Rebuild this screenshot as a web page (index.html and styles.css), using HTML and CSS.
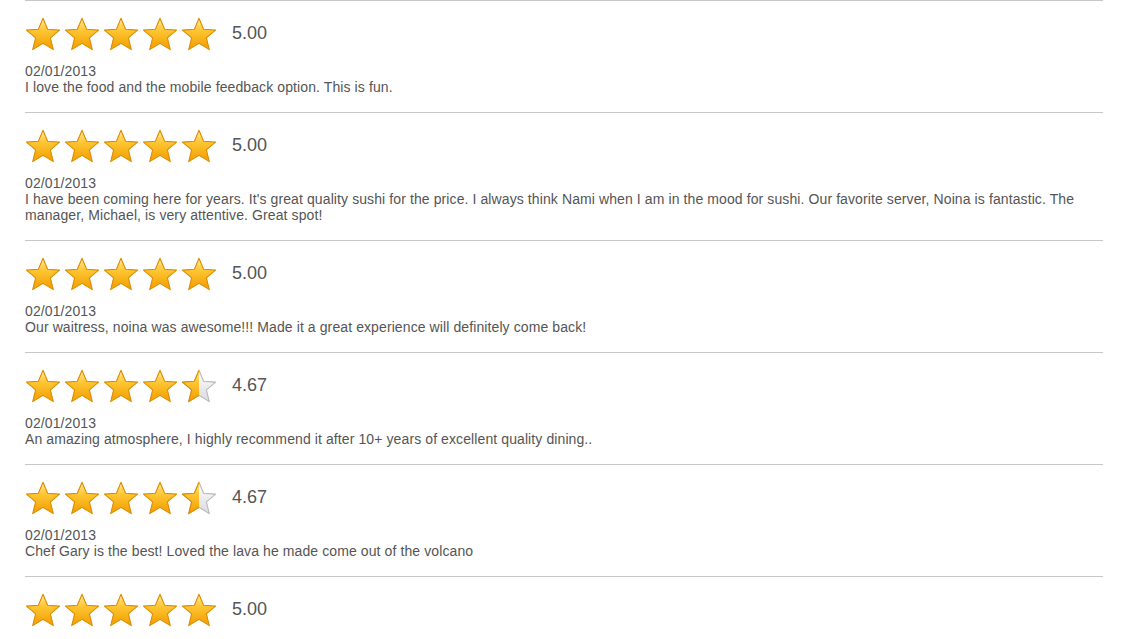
FILE: index.html
```html
<!DOCTYPE html>
<html>
<head>
<meta charset="utf-8">
<link rel="stylesheet" href="styles.css">
</head>
<body>
<svg class="defs" width="0" height="0" aria-hidden="true">
  <defs>
    <linearGradient id="gold" x1="0" y1="0" x2="0" y2="1">
      <stop offset="0" stop-color="#ffec94"/>
      <stop offset="0.4" stop-color="#fdc532"/>
      <stop offset="1" stop-color="#f29c00"/>
    </linearGradient>
    <linearGradient id="grey" x1="0" y1="0" x2="0" y2="1">
      <stop offset="0" stop-color="#ffffff"/>
      <stop offset="1" stop-color="#dadada"/>
    </linearGradient>
    <clipPath id="lefthalf"><rect x="0" y="0" width="18" height="36"/></clipPath>
    <path id="starpath" d="M18 1.2 L22.6 12.2 L34.6 13.1 L25.4 20.9 L28.3 32.6 L18 26.4 L7.7 32.6 L10.6 20.9 L1.4 13.1 L13.4 12.2 Z"/>
  </defs>
</svg>

<div class="reviews">
  <div class="review">
    <div class="rating">
      <div class="stars">
        <svg class="star" viewBox="0 0 36 34"><use href="#starpath" class="full"/></svg>
        <svg class="star" viewBox="0 0 36 34"><use href="#starpath" class="full"/></svg>
        <svg class="star" viewBox="0 0 36 34"><use href="#starpath" class="full"/></svg>
        <svg class="star" viewBox="0 0 36 34"><use href="#starpath" class="full"/></svg>
        <svg class="star" viewBox="0 0 36 34"><use href="#starpath" class="full"/></svg>
      </div>
      <span class="score">5.00</span>
    </div>
    <div class="date">02/01/2013</div>
    <div class="comment">I love the food and the mobile feedback option. This is fun.</div>
  </div>

  <div class="review">
    <div class="rating">
      <div class="stars">
        <svg class="star" viewBox="0 0 36 34"><use href="#starpath" class="full"/></svg>
        <svg class="star" viewBox="0 0 36 34"><use href="#starpath" class="full"/></svg>
        <svg class="star" viewBox="0 0 36 34"><use href="#starpath" class="full"/></svg>
        <svg class="star" viewBox="0 0 36 34"><use href="#starpath" class="full"/></svg>
        <svg class="star" viewBox="0 0 36 34"><use href="#starpath" class="full"/></svg>
      </div>
      <span class="score">5.00</span>
    </div>
    <div class="date">02/01/2013</div>
    <div class="comment">I have been coming here for years. It's great quality sushi for the price. I always think Nami when I am in the mood for sushi. Our favorite server, Noina is fantastic. The manager, Michael, is very attentive. Great spot!</div>
  </div>

  <div class="review">
    <div class="rating">
      <div class="stars">
        <svg class="star" viewBox="0 0 36 34"><use href="#starpath" class="full"/></svg>
        <svg class="star" viewBox="0 0 36 34"><use href="#starpath" class="full"/></svg>
        <svg class="star" viewBox="0 0 36 34"><use href="#starpath" class="full"/></svg>
        <svg class="star" viewBox="0 0 36 34"><use href="#starpath" class="full"/></svg>
        <svg class="star" viewBox="0 0 36 34"><use href="#starpath" class="full"/></svg>
      </div>
      <span class="score">5.00</span>
    </div>
    <div class="date">02/01/2013</div>
    <div class="comment">Our waitress, noina was awesome!!! Made it a great experience will definitely come back!</div>
  </div>

  <div class="review">
    <div class="rating">
      <div class="stars">
        <svg class="star" viewBox="0 0 36 34"><use href="#starpath" class="full"/></svg>
        <svg class="star" viewBox="0 0 36 34"><use href="#starpath" class="full"/></svg>
        <svg class="star" viewBox="0 0 36 34"><use href="#starpath" class="full"/></svg>
        <svg class="star" viewBox="0 0 36 34"><use href="#starpath" class="full"/></svg>
        <svg class="star" viewBox="0 0 36 34"><use href="#starpath" class="empty"/><use href="#starpath" class="full" clip-path="url(#lefthalf)"/></svg>
      </div>
      <span class="score">4.67</span>
    </div>
    <div class="date">02/01/2013</div>
    <div class="comment">An amazing atmosphere, I highly recommend it after 10+ years of excellent quality dining..</div>
  </div>

  <div class="review">
    <div class="rating">
      <div class="stars">
        <svg class="star" viewBox="0 0 36 34"><use href="#starpath" class="full"/></svg>
        <svg class="star" viewBox="0 0 36 34"><use href="#starpath" class="full"/></svg>
        <svg class="star" viewBox="0 0 36 34"><use href="#starpath" class="full"/></svg>
        <svg class="star" viewBox="0 0 36 34"><use href="#starpath" class="full"/></svg>
        <svg class="star" viewBox="0 0 36 34"><use href="#starpath" class="empty"/><use href="#starpath" class="full" clip-path="url(#lefthalf)"/></svg>
      </div>
      <span class="score">4.67</span>
    </div>
    <div class="date">02/01/2013</div>
    <div class="comment">Chef Gary is the best! Loved the lava he made come out of the volcano</div>
  </div>

  <div class="review">
    <div class="rating">
      <div class="stars">
        <svg class="star" viewBox="0 0 36 34"><use href="#starpath" class="full"/></svg>
        <svg class="star" viewBox="0 0 36 34"><use href="#starpath" class="full"/></svg>
        <svg class="star" viewBox="0 0 36 34"><use href="#starpath" class="full"/></svg>
        <svg class="star" viewBox="0 0 36 34"><use href="#starpath" class="full"/></svg>
        <svg class="star" viewBox="0 0 36 34"><use href="#starpath" class="full"/></svg>
      </div>
      <span class="score">5.00</span>
    </div>
  </div>
</div>
</body>
</html>
```

FILE: styles.css
```css
html, body {
  margin: 0;
  padding: 0;
  background: #ffffff;
}

body {
  font-family: "Liberation Sans", Arial, sans-serif;
  color: #555555;
  font-size: 14px;
  line-height: 16px;
}

.defs {
  position: absolute;
  width: 0;
  height: 0;
  overflow: hidden;
}

.reviews {
  margin-left: 25px;
  width: 1078px;
}

.review {
  border-top: 1px solid #c8c8c8;
  padding: 15px 0 17px;
}

.rating {
  display: flex;
  align-items: center;
  height: 36px;
  margin-bottom: 11px;
}

.stars {
  display: flex;
  gap: 3px;
  margin-right: 15px;
}

.star {
  width: 36px;
  height: 34px;
  display: block;
}

.full {
  fill: url(#gold);
  stroke: #dc8c00;
  stroke-width: 1.1;
  stroke-linejoin: round;
}

.empty {
  fill: url(#grey);
  stroke: #b8b8b8;
  stroke-width: 1.1;
  stroke-linejoin: round;
}

.score {
  font-size: 18px;
  line-height: 20px;
  color: #555555;
  margin-top: -3px;
}

.date,
.comment {
  font-size: 14px;
  line-height: 16px;
  letter-spacing: 0.1px;
}
```
